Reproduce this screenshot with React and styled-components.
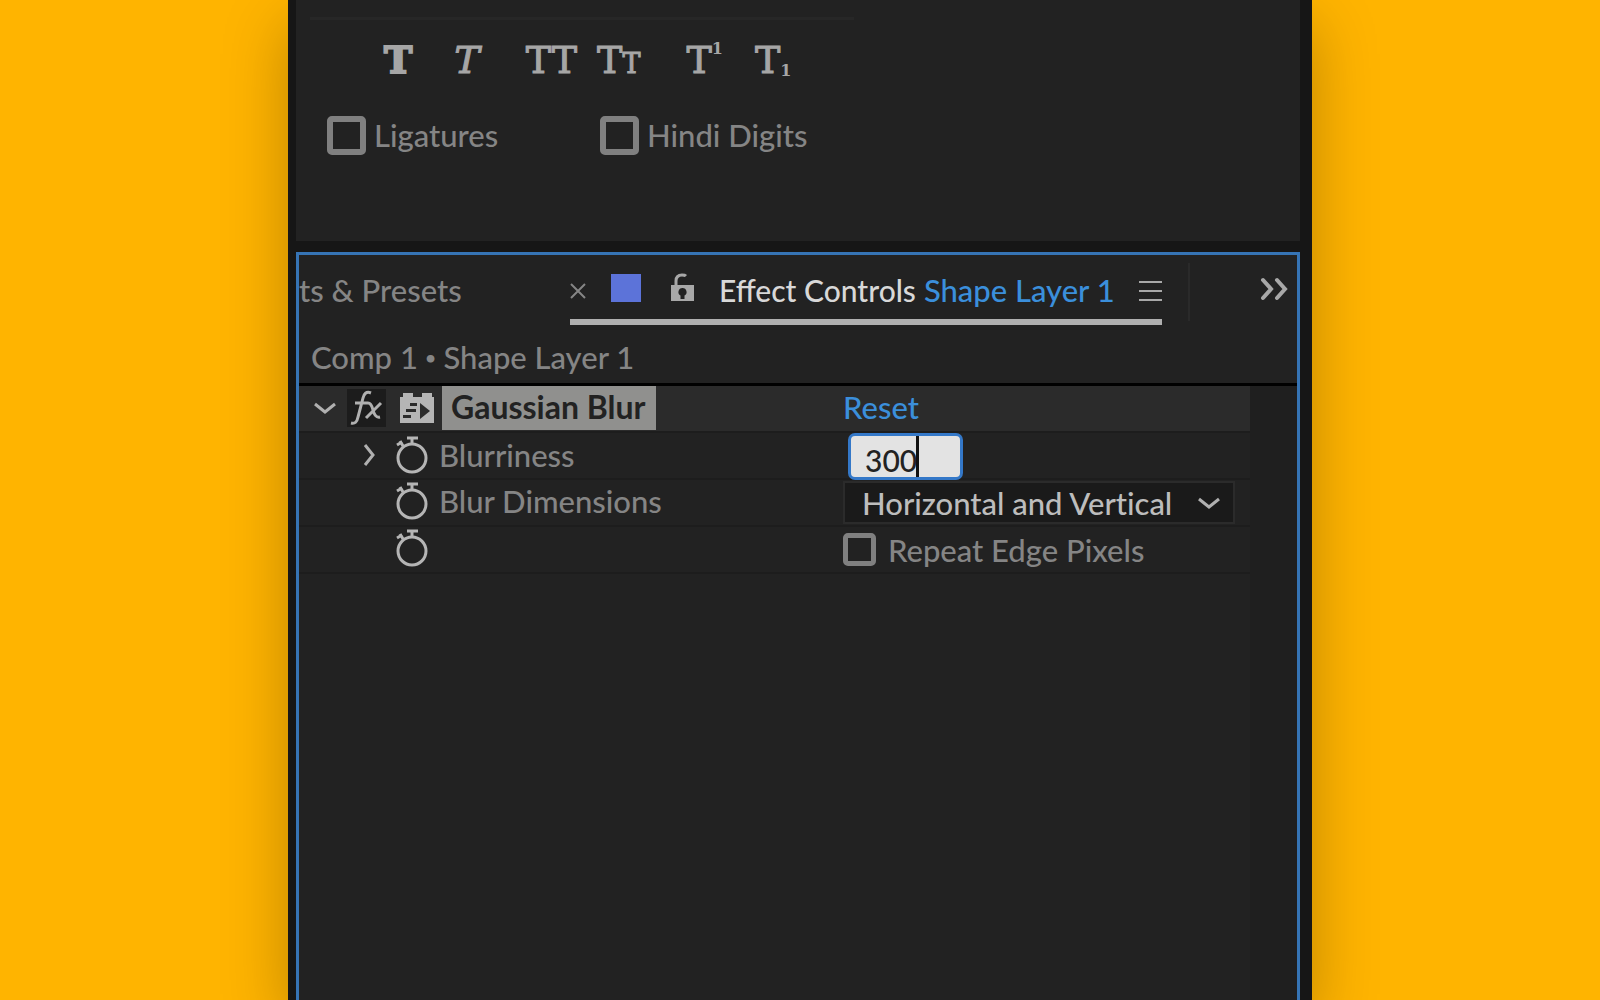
import React, { useState } from 'react';
import styled, { createGlobalStyle } from 'styled-components';

const GlobalStyle = createGlobalStyle`
    * {
        box-sizing: border-box;
    }

    body {
        margin: 0;
        background: #ffb400;
        color: #858585;
        font-family: Lato, "Open Sans", sans-serif;
        font-size: 31px;
        font-weight: 500;
        line-height: 40px;
    }

    button, input, select {
        margin: 0;
        padding: 0;
        border: none;
        outline: none;
        background: none;
        color: inherit;
        font: inherit;
    }

    svg {
        display: block;
        flex: none;
    }
`;

const StyledPage = styled.div`
    display: flex;
    justify-content: center;
    height: 100vh;
    overflow: hidden;
`;

const StyledFrame = styled.main`
    display: flex;
    flex-direction: column;
    gap: 11px;
    width: 64%;
    padding: 0 12px 0 8px;
    background: #161616;
    box-shadow: 0 24px 60px rgba(0, 0, 0, 0.26);
`;

const StyledCharacterPanel = styled.section`
    flex: none;
    padding: 17px 14px 86px;
    background: #222;
`;

const StyledRule = styled.hr`
    width: 544px;
    height: 3px;
    margin: 0 0 20px;
    border: none;
    background: #272727;
`;

const StyledStyles = styled.div`
    display: flex;
    gap: 46px;
    height: 40px;
    padding-left: 74px;
    color: #a6a6a6;
    font-family: "DejaVu Serif", serif;
    font-size: 38px;
`;

const StyledStyleGroup = styled.div`
    display: flex;
    gap: ${({ $gap }) => $gap}px;
`;

const StyledStyleButton = styled.button`
    display: flex;
    font-weight: ${({ $bold }) => $bold ? 'bold' : 'normal'};
    font-style: ${({ $italic }) => $italic ? 'italic' : 'normal'};
    -webkit-text-stroke: ${({ $bold }) => $bold ? 2 : 1}px #a6a6a6;

    small {
        font-size: 27px;
    }

    sup, sub {
        font-size: 16px;
        font-weight: bold;
        line-height: 18px;
        -webkit-text-stroke: 0;
    }

    sub {
        align-self: flex-end;
    }
`;

const StyledOptions = styled.div`
    display: grid;
    grid-template-columns: 273px 1fr;
    margin-top: 35px;
    padding-left: 17px;
`;

const StyledCheck = styled.label`
    display: flex;
    align-items: center;
    gap: ${({ $gap }) => $gap}px;
    white-space: nowrap;
`;

const StyledCheckbox = styled.input`
    width: ${({ $size }) => $size}px;
    height: ${({ $size }) => $size}px;
    border: ${({ $line }) => $line}px solid #808080;
    border-radius: 5px;
    appearance: none;
`;

const StyledEffectPanel = styled.section`
    display: flex;
    flex: 1;
    flex-direction: column;
    border: 3px solid #3674b5;
    border-bottom: none;
    background: #222;
`;

const StyledTabs = styled.nav`
    display: flex;
    height: 70px;
`;

const StyledTab = styled.button`
    width: 271px;
    height: 70px;
    text-align: left;
`;

const StyledActiveTab = styled.div`
    display: flex;
    align-items: center;
    width: 592px;
    padding-top: 8px;
    border-bottom: 6px solid #b0b0b0;
    white-space: nowrap;
`;

const StyledMarks = styled.div`
    display: flex;
    align-items: center;
    gap: 30px;
    margin: 0 24px 7px 25px;
`;

const StyledSwatch = styled.span`
    width: 30px;
    height: 28px;
    background: #5c73d9;
`;

const StyledTabTitle = styled.button`
    display: flex;
    flex: 1;
    gap: 8px;
    padding-bottom: 2px;
    color: #d8d8d8;
    font-size: 30px;

    span {
        color: #3b8fdb;
        font-size: 31px;
    }
`;

const StyledMore = styled.div`
    display: flex;
    flex: 1;
    justify-content: flex-end;
    height: 58px;
    margin: 8px 8px 0 26px;
    padding-top: 7px;
    border-left: 2px solid #2a2a2a;
`;

const StyledPath = styled.div`
    display: flex;
    align-items: center;
    gap: 7px;
    height: 61px;
    padding: 6px 12px 0;
    border-bottom: 3px solid #000;

    small {
        font-size: 20px;
    }
`;

const StyledBody = styled.div`
    flex: 1;
    padding-right: 47px;
    background: linear-gradient(to left, #1f1f1f 47px, #222 47px);
`;

const StyledRow = styled.div`
    display: grid;
    grid-template-columns: 544px 1fr;
    align-items: center;
    height: 47px;
    border-bottom: 2px solid #1d1d1d;
    background: ${({ $header }) => $header ? '#2b2b2b' : '#222'};
`;

const StyledName = styled.div`
    display: flex;
    align-items: center;
    height: 45px;
    padding-bottom: ${({ $drop }) => $drop ? 1 : 3}px;
    padding-left: ${({ $indent }) => $indent}px;
`;

const StyledIconButton = styled.button`
    display: grid;
    place-items: center;
    width: ${({ $width }) => $width}px;
    height: 38px;
`;

const StyledFx = styled(StyledIconButton)`
    margin-right: 14px;
    background: #1c1c1c;
`;

const StyledEffectName = styled.span`
    height: 44px;
    margin-left: 8px;
    padding: 0 10px 0 9px;
    background: #90908e;
    color: #222;
    font-size: 32px;
    font-weight: bold;
    line-height: 42px;
`;

const StyledLabel = styled.label`
    margin-left: 11px;
`;

const StyledReset = styled.button`
    justify-self: start;
    padding-bottom: 3px;
    color: #3b8fdb;
`;

const StyledValueBox = styled.div`
    position: relative;
    height: 47px;
    margin-left: 5px;
`;

const StyledValue = styled.input`
    width: 115px;
    height: 47px;
    padding: 6px 0 0 14px;
    border: 3px solid #3478c8;
    border-radius: 7px;
    background: #e3e3e3;
    caret-color: transparent;
    color: #222;
    font-size: 30px;
`;

const StyledCaret = styled.span`
    position: absolute;
    top: 3px;
    left: 68px;
    width: 3px;
    height: 41px;
    background: #111;
    pointer-events: none;
`;

const StyledSelectWrapper = styled.div`
    display: grid;
    grid-template-columns: 392px;
    align-items: center;

    > * {
        grid-area: 1 / 1;
    }

    svg {
        justify-self: end;
        margin-right: 15px;
        pointer-events: none;
    }
`;

const StyledSelect = styled.select`
    height: 43px;
    padding: 0 0 2px 17px;
    border: 2px solid #2b2b2b;
    background: #1a1a1a;
    color: #bdbdbd;
    font-variant-ligatures: none;
    appearance: none;
`;

const Chevron = ({ right }) => (
    <svg width="22" height="22" viewBox="0 0 22 22" fill="none" stroke="#b0b0b0" strokeWidth="3">
        <path d={right ? 'M6 1l8 10-8 10' : 'M1 7l10 8 10-8'} />
    </svg>
);

const Stopwatch = () => (
    <svg width="32" height="38" viewBox="0 0 32 38" fill="none" stroke="#b5b5b5" strokeWidth="3">
        <circle cx="16" cy="22" r="14" />
        <path d="M11 2h11M16 2v6M1 9l5-3" />
        <path d="M4 5l3 5" />
    </svg>
);

const Lock = () => (
    <svg width="24" height="30" viewBox="0 0 24 30">
        <path d="M5 12V8c0-4 2-6 6-6 2 0 3 0 4 1" fill="none" stroke="#a8a8a8" strokeWidth="3" />
        <path d="M0 12h23v16H0z" fill="#a8a8a8" />
        <path d="M11.500 15a4 4 0 0 1 2 7.500V26h-4v-3.500a4 4 0 0 1 2-7.500z" fill="#222" />
    </svg>
);

const Brick = () => (
    <svg width="34" height="32" viewBox="0 0 34 32">
        <path d="M0 5h3V1h10v4h9V1h10v4h2v26H0z" fill="#b5b5b5" />
        <path d="M10 12.500h7M6 18.500h10M3 24.500h8" stroke="#2b2b2b" strokeWidth="3" />
        <path d="M20 11l10 8-10 8z" fill="#2b2b2b" />
    </svg>
);

const Fx = () => (
    <svg width="34" height="38" viewBox="0 0 34 38" fill="none" stroke="#b0b0b0" strokeWidth="3">
        <path d="M21 4c-5-2-7 1-8 5L8 28c-1 5-3 7-7 6M5 14h13" />
        <path d="M18 14c3 0 4 3 5 7s3 8 7 7M31 14L16 29" />
    </svg>
);

const App = () => {
    const [ blurriness, setBlurriness ] = useState('300');

    return (
        <>
            <GlobalStyle />
            <StyledPage>
                <StyledFrame>
                    <StyledCharacterPanel>
                        <StyledRule />
                        <StyledStyles>
                            <StyledStyleGroup $gap={42}>
                                <StyledStyleButton type="button" $bold>T</StyledStyleButton>
                                <StyledStyleButton type="button" $italic>T</StyledStyleButton>
                            </StyledStyleGroup>
                            <StyledStyleGroup $gap={20}>
                                <StyledStyleButton type="button">TT</StyledStyleButton>
                                <StyledStyleButton type="button"><span>T<small>T</small></span></StyledStyleButton>
                            </StyledStyleGroup>
                            <StyledStyleGroup $gap={32}>
                                <StyledStyleButton type="button">T<sup>1</sup></StyledStyleButton>
                                <StyledStyleButton type="button">T<sub>1</sub></StyledStyleButton>
                            </StyledStyleGroup>
                        </StyledStyles>
                        <StyledOptions>
                            <StyledCheck $gap={8}>
                                <StyledCheckbox type="checkbox" $size={39} $line={6} />
                                Ligatures
                            </StyledCheck>
                            <StyledCheck $gap={8}>
                                <StyledCheckbox type="checkbox" $size={39} $line={6} />
                                Hindi Digits
                            </StyledCheck>
                        </StyledOptions>
                    </StyledCharacterPanel>

                    <StyledEffectPanel>
                        <StyledTabs>
                            <StyledTab type="button">ts &amp; Presets</StyledTab>
                            <StyledActiveTab>
                                <button type="button" aria-label="Close tab">
                                    <svg width="16" height="16" viewBox="0 0 16 16" stroke="#858585" strokeWidth="2">
                                        <path d="M1 1l14 14M15 1L1 15" />
                                    </svg>
                                </button>
                                <StyledMarks>
                                    <StyledSwatch />
                                    <Lock />
                                </StyledMarks>
                                <StyledTabTitle type="button">Effect Controls <span>Shape Layer 1</span></StyledTabTitle>
                                <button type="button" aria-label="Panel menu">
                                    <svg width="23" height="20" viewBox="0 0 23 20" stroke="#a8a8a8" strokeWidth="2">
                                        <path d="M0 1h23M0 10h23M0 19h23" />
                                    </svg>
                                </button>
                            </StyledActiveTab>
                            <StyledMore>
                                <StyledIconButton type="button" aria-label="More tabs" $width={30}>
                                    <svg width="30" height="24" viewBox="0 0 30 24" fill="none" stroke="#a8a8a8" strokeWidth="4" strokeLinecap="round">
                                        <path d="M4 3l8 9-8 9M18 3l8 9-8 9" />
                                    </svg>
                                </StyledIconButton>
                            </StyledMore>
                        </StyledTabs>
                        <StyledPath>Comp 1 <small>•</small> Shape Layer 1</StyledPath>
                        <StyledBody>
                            <StyledRow $header>
                                <StyledName $indent={3} $drop>
                                    <StyledIconButton type="button" aria-label="Collapse" $width={45}><Chevron /></StyledIconButton>
                                    <StyledFx type="button" aria-label="Toggle effect" $width={39}><Fx /></StyledFx>
                                    <Brick />
                                    <StyledEffectName>Gaussian Blur</StyledEffectName>
                                </StyledName>
                                <StyledReset type="button">Reset</StyledReset>
                            </StyledRow>
                            <StyledRow>
                                <StyledName $indent={44}>
                                    <StyledIconButton type="button" aria-label="Expand" $width={53}><Chevron right /></StyledIconButton>
                                    <Stopwatch />
                                    <StyledLabel htmlFor="blurriness">Blurriness</StyledLabel>
                                </StyledName>
                                <StyledValueBox>
                                    <StyledValue id="blurriness" value={blurriness} onChange={e => setBlurriness(e.target.value)} />
                                    <StyledCaret />
                                </StyledValueBox>
                            </StyledRow>
                            <StyledRow>
                                <StyledName $indent={97}>
                                    <Stopwatch />
                                    <StyledLabel htmlFor="dimensions">Blur Dimensions</StyledLabel>
                                </StyledName>
                                <StyledSelectWrapper>
                                    <StyledSelect id="dimensions">
                                        <option>Horizontal and Vertical</option>
                                        <option>Horizontal</option>
                                        <option>Vertical</option>
                                    </StyledSelect>
                                    <Chevron />
                                </StyledSelectWrapper>
                            </StyledRow>
                            <StyledRow>
                                <StyledName $indent={97}>
                                    <Stopwatch />
                                </StyledName>
                                <StyledCheck $gap={12}>
                                    <StyledCheckbox type="checkbox" $size={33} $line={5} />
                                    Repeat Edge Pixels
                                </StyledCheck>
                            </StyledRow>
                        </StyledBody>
                    </StyledEffectPanel>
                </StyledFrame>
            </StyledPage>
        </>
    );
};

export default App;
